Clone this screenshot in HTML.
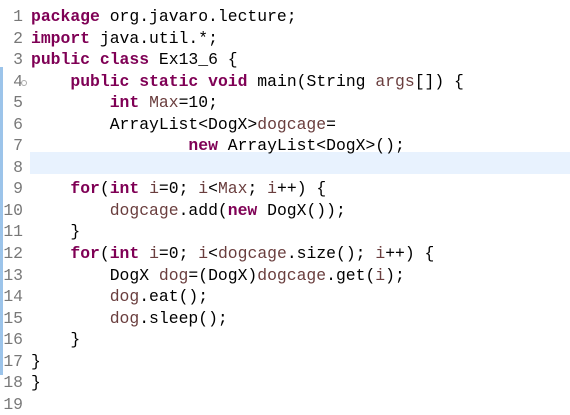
<!DOCTYPE html>
<html><head><style>
body{margin:0;width:570px;height:415px;background:#fff;overflow:hidden;position:relative;font-family:"Liberation Mono",monospace;font-size:16.4px;}
.bar{position:absolute;left:0;top:67px;width:3px;height:308px;background:#9cc4ea;}
.hl{position:absolute;left:30px;top:152px;width:540px;height:22px;background:#e8f2fe;}
.ln{position:absolute;left:0;width:23px;text-align:right;color:#787878;}
.c{position:absolute;left:31px;color:#000;}
.row{height:21.55px;line-height:21.55px;white-space:pre;}
.k{color:#7f0055;font-weight:bold;}
.v{color:#6a3e3e;}
.fold{position:absolute;left:21px;top:80px;width:4px;height:4px;border:1px solid #aaa;border-radius:50%;}
</style></head><body>
<div class="bar"></div><div class="hl"></div>
<div class="ln" style="top:6px"><div class="row">1</div><div class="row">2</div><div class="row">3</div><div class="row">4</div><div class="row">5</div><div class="row">6</div><div class="row">7</div><div class="row">8</div><div class="row">9</div><div class="row">10</div><div class="row">11</div><div class="row">12</div><div class="row">13</div><div class="row">14</div><div class="row">15</div><div class="row">16</div><div class="row">17</div><div class="row">18</div><div class="row">19</div></div>
<div class="c" style="top:6px"><div class="row"><span class="k">package</span> org.javaro.lecture;</div><div class="row"><span class="k">import</span> java.util.*;</div><div class="row"><span class="k">public</span> <span class="k">class</span> Ex13_6 {</div><div class="row">    <span class="k">public</span> <span class="k">static</span> <span class="k">void</span> main(String <span class="v">args</span>[]) {</div><div class="row">        <span class="k">int</span> <span class="v">Max</span>=10;</div><div class="row">        ArrayList&lt;DogX&gt;<span class="v">dogcage</span>=</div><div class="row">                <span class="k">new</span> ArrayList&lt;DogX&gt;();</div><div class="row"> </div><div class="row">    <span class="k">for</span>(<span class="k">int</span> <span class="v">i</span>=0; <span class="v">i</span>&lt;<span class="v">Max</span>; <span class="v">i</span>++) {</div><div class="row">        <span class="v">dogcage</span>.add(<span class="k">new</span> DogX());</div><div class="row">    }</div><div class="row">    <span class="k">for</span>(<span class="k">int</span> <span class="v">i</span>=0; <span class="v">i</span>&lt;<span class="v">dogcage</span>.size(); <span class="v">i</span>++) {</div><div class="row">        DogX <span class="v">dog</span>=(DogX)<span class="v">dogcage</span>.get(<span class="v">i</span>);</div><div class="row">        <span class="v">dog</span>.eat();</div><div class="row">        <span class="v">dog</span>.sleep();</div><div class="row">    }</div><div class="row">}</div><div class="row">}</div><div class="row"> </div></div>
<div class="fold"></div>
</body></html>
